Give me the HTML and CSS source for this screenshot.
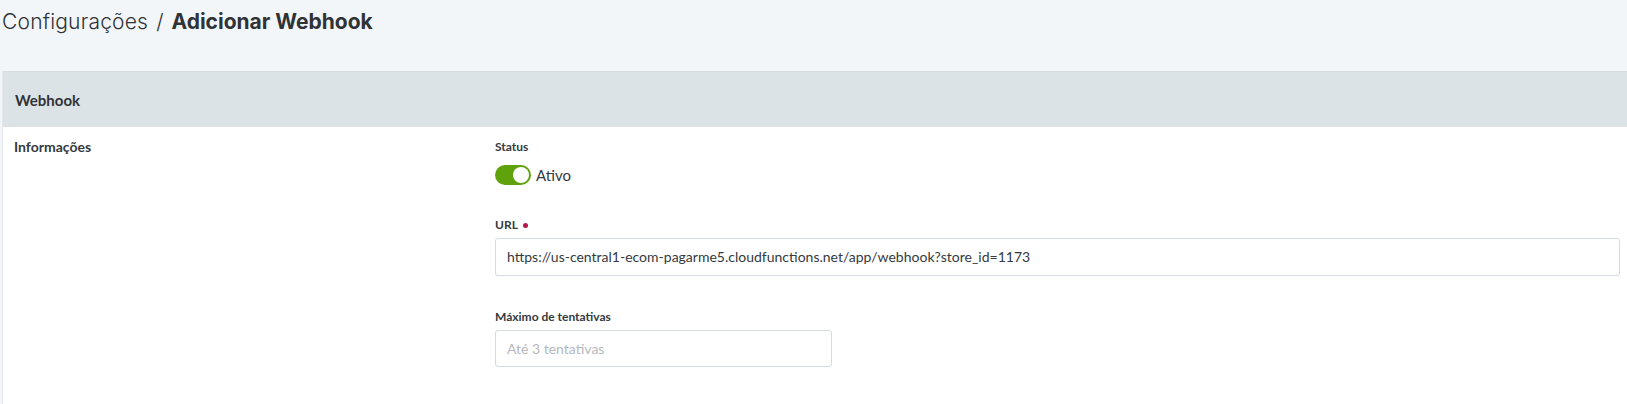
FILE: index.html
```html
<!DOCTYPE html>
<html lang="pt-BR">
<head>
<meta charset="utf-8">
<title>Adicionar Webhook</title>
<link rel="stylesheet" href="styles.css">
</head>
<body>
  <h1 class="page-title">
    <span class="crumb">Configurações</span>
    <span class="sep">/</span>
    <span class="current">Adicionar Webhook</span>
  </h1>
  <section class="card">
    <header class="card-header">Webhook</header>
    <div class="card-body">
      <div class="section-name">Informações</div>
      <div class="fields">
        <div class="field">
          <div class="label">Status</div>
          <div class="toggle-row">
            <span class="toggle"><span class="knob"></span></span>
            <span class="toggle-text">Ativo</span>
          </div>
        </div>
        <div class="field field-url">
          <div class="label">URL <span class="req"></span></div>
          <div class="input input-wide">https://us-central1-ecom-pagarme5.cloudfunctions.net/app/webhook?store_id=1173</div>
        </div>
        <div class="field field-max">
          <div class="label">Máximo de tentativas</div>
          <div class="input input-small placeholder">Até 3 tentativas</div>
        </div>
      </div>
    </div>
  </section>
</body>
</html>
```
FILE: styles.css
```css
* { box-sizing: border-box; }
html, body { margin: 0; padding: 0; }
body {
  background: #f3f6f9;
  font-family: Lato, "Liberation Sans", sans-serif;
  color: #343a40;
  overflow: hidden;
}
.page-title {
  margin: 0;
  padding: 7px 0 0 2px;
  height: 71px;
  font-family: Inter, "DejaVu Sans", sans-serif;
  font-size: 21px;
  line-height: 30px;
  color: #2f3337;
  display: flex;
  gap: 8px;
}
.crumb { font-weight: 300; letter-spacing: 0.2px; }
.sep { font-weight: 300; }
.current { font-weight: 700; }
.card {
  margin-left: 2px;
  background: #fff;
  border-left: 1px solid #e4e8eb;
  height: 340px;
}
.card-header {
  height: 56px;
  background: #dce3e6;
  padding: 0 12px;
  font-weight: 700;
  font-size: 15px;
  line-height: 56px;
  color: #2f3337;
  border-top: 1px solid #d6dde1;
}
.card-body {
  display: grid;
  grid-template-columns: 481px 1fr;
  padding: 0 7px 0 11px;
}
.section-name {
  padding-top: 10px;
  font-weight: 700;
  font-size: 14px;
  line-height: 20px;
  color: #343a40;
}
.fields { padding-top: 12px; }
.label {
  font-weight: 700;
  font-size: 12px;
  line-height: 16px;
  color: #343a40;
  display: flex;
  align-items: center;
  gap: 5px;
}
.req {
  width: 5px; height: 5px;
  border-radius: 50%;
  background: #b3174d;
}
.toggle-row {
  margin-top: 10px;
  display: flex;
  align-items: center;
  gap: 5px;
}
.toggle {
  width: 36px; height: 20px;
  border-radius: 10px;
  background: #5fa20c;
  display: flex;
  justify-content: flex-end;
  align-items: center;
  padding: 2px;
}
.knob {
  width: 16px; height: 16px;
  border-radius: 50%;
  background: #fff;
}
.toggle-text { font-size: 15px; color: #343a40; }
.field-url { margin-top: 32px; }
.field-max { margin-top: 33px; }
.input {
  margin-top: 5px;
  height: 38px;
  border: 1px solid #d5dbe0;
  border-radius: 3px;
  background: #fff;
  padding: 0 11px;
  font-size: 14px;
  line-height: 36px;
  color: #343a40;
}
.input-small { width: 337px; height: 37px; }
.placeholder { color: #b4b9be; }
```
